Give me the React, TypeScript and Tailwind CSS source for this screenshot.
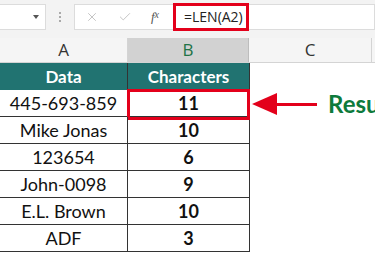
import { X, Check } from 'lucide-react';

const rows = [
  { data: '445-693-859', chars: '11' },
  { data: 'Mike Jonas', chars: '10' },
  { data: '123654', chars: '6' },
  { data: 'John-0098', chars: '9' },
  { data: 'E.L. Brown', chars: '10' },
  { data: 'ADF', chars: '3' },
];

const App = () => {
  return (
    <div className="w-[375px] h-[275px] overflow-hidden bg-white relative" style={{ fontFamily: 'Lato, "Open Sans", sans-serif' }}>
      {/* Formula bar */}
      <div className="h-[31px] bg-[#f3f3f3] flex items-center pt-[2px]">
        <div className="w-[46px] h-[26px] bg-white border border-[#dcdcdc] border-l-0 flex items-center justify-end pr-[6px]">
          <div className="w-0 h-0 border-l-[3px] border-r-[3px] border-t-[4px] border-l-transparent border-r-transparent border-t-[#555]" />
        </div>
        <div className="w-[28px] flex flex-col items-center gap-[2px]">
          <div className="w-[2px] h-[2px] bg-[#aaa]" />
          <div className="w-[2px] h-[2px] bg-[#aaa]" />
          <div className="w-[2px] h-[2px] bg-[#aaa]" />
        </div>
        <div className="flex-1 h-[26px] bg-white border border-[#dcdcdc] flex items-center">
          <div className="w-[33px] flex justify-center text-[#bdbdbd]"><X size={14} strokeWidth={1.5} /></div>
          <div className="w-[33px] flex justify-center text-[#bdbdbd]"><Check size={14} strokeWidth={1.5} /></div>
          <div className="w-[28px] flex justify-center text-[#555] text-[13px] italic" style={{ fontFamily: '"Liberation Serif", serif' }}>f<span className="text-[10px]">x</span></div>
          <div className="ml-[4px] w-[76px] h-[28px] border-[3px] border-[#e3001b] flex items-center pl-[8px] text-[14px] text-[#222]" style={{ fontFamily: '"Open Sans", sans-serif' }}>
            =LEN(A2)
          </div>
        </div>
      </div>
      <div className="h-[7px] bg-[#f3f3f3]" />

      {/* Column headers */}
      <div className="h-[25px] flex bg-[#f5f5f5] border-b border-[#d4d4d4] text-[17px] text-[#333]" style={{ fontFamily: '"Open Sans", sans-serif' }}>
        <div className="w-[128px] flex items-center justify-center border-r border-[#d4d4d4]">A</div>
        <div className="w-[121px] flex items-center justify-center bg-[#d2d2d2] text-[#217346] border-r border-[#bdbdbd]">B</div>
        <div className="w-[123px] flex items-center justify-center border-r border-[#d4d4d4]">C</div>
        <div className="flex-1" />
      </div>

      {/* Sheet */}
      <div className="flex">
        <div className="w-[250px] shrink-0 border-r border-[#333]">
          <div className="h-[27px] flex bg-[#217371] text-white font-bold text-[17px]">
            <div className="w-[128px] flex items-center justify-center border-r border-[#333]">Data</div>
            <div className="flex-1 flex items-center justify-center">Characters</div>
          </div>
          {rows.map((r, i) => (
            <div key={i} className="h-[27px] flex border-b border-[#333] text-[18px] text-[#111] relative">
              <div className="w-[128px] flex items-center justify-center border-r border-[#333]">{r.data}</div>
              <div className="flex-1 flex items-center justify-center font-bold">{r.chars}</div>
              {i === 0 && (
                <div className="absolute left-[127px] top-[-1px] w-[123px] h-[31px] border-[3px] border-[#e3001b]" />
              )}
            </div>
          ))}
        </div>

        {/* Annotation */}
        <div className="flex-1 flex items-start pt-[29px] overflow-hidden">
          <div className="flex items-center shrink-0">
            <div className="shrink-0 w-0 h-0 border-t-[11px] border-b-[11px] border-r-[25px] border-t-transparent border-b-transparent border-r-[#e3001b] ml-[2px]" />
            <div className="shrink-0 w-[40px] h-[3px] bg-[#e3001b]" />
            <div className="shrink-0 ml-[11px] text-[24px] leading-none font-bold text-[#0d7a3c] whitespace-nowrap">Result</div>
          </div>
        </div>
      </div>
    </div>
  );
};

export default App;
